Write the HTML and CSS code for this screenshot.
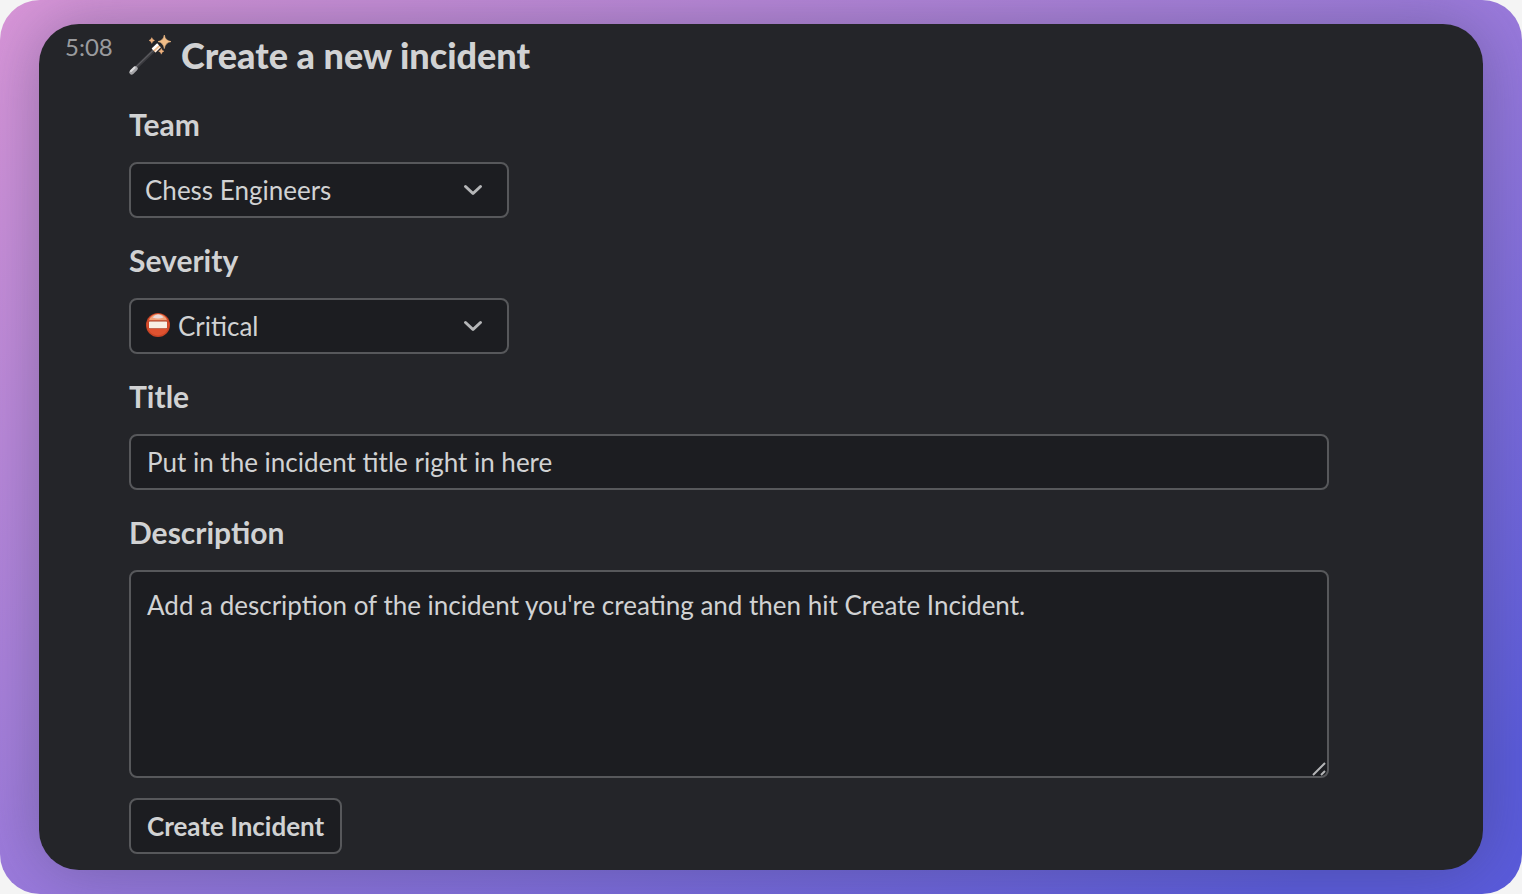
FILE: index.html
```html
<!DOCTYPE html>
<html lang="en">
<head>
<meta charset="utf-8">
<meta name="viewport" content="width=device-width, initial-scale=1">
<title>Create a new incident</title>
<link rel="stylesheet" href="styles.css">
</head>
<body>
<main class="stage">
  <article class="message">
    <time class="time" datetime="05:08">5:08</time>
    <form class="form">
      <h1 class="heading">
        <svg class="wand" viewBox="0 0 42 42" aria-hidden="true">
          <path d="M6 34.5 L28 13.5" stroke="#3c3c40" stroke-width="3.4"/>
          <path d="M6 33.8 L27 13.6" stroke="#5e5e62" stroke-width="1.1"/>
          <path d="M2.6 38.2 L6.4 34.6" stroke="#a5a5a8" stroke-width="4.8" stroke-linecap="round"/>
          <path d="M2 37 L5.6 33.6" stroke="#dededf" stroke-width="2" stroke-linecap="round"/>
          <path d="M24.6 16.6 L30 11.4" stroke="#efb98a" stroke-width="5"/>
          <path d="M23.5 15.4 L29 10.2" stroke="#fff" stroke-width="2.6"/>
          <path d="M26 18 L31.3 12.9" stroke="#fff4ea" stroke-width="1.2"/>
          <path d="M35.3 1 Q36.2 6.6 42 7.6 Q36.2 8.6 35.3 14.6 Q34.4 8.6 29 7.6 Q34.4 6.6 35.3 1Z" fill="#f0bd88" stroke="#f0bd88" stroke-width="0.6"/>
          <path d="M22.8 3.6 Q23.3 5.8 25.6 6.4 Q23.3 7 22.8 9.4 Q22.3 7 20 6.4 Q22.3 5.8 22.8 3.6Z" fill="#eeb07c" stroke="#eeb07c" stroke-width="0.4"/>
          <path d="M32.3 14.4 Q32.8 16.7 35 17.2 Q32.8 17.7 32.3 20.2 Q31.8 17.7 29.6 17.2 Q31.8 16.7 32.3 14.4Z" fill="#eeb07c" stroke="#eeb07c" stroke-width="0.4"/>
        </svg>
        Create a new incident
      </h1>

      <div class="field">
        <label class="label" for="team">Team</label>
        <div class="picker">
          <select class="control select" id="team">
            <option>Chess Engineers</option>
          </select>
          <svg class="chevron" viewBox="0 0 20 12" aria-hidden="true"><path d="M2.5 2.5 L10 9.5 L17.5 2.5"/></svg>
        </div>
      </div>

      <div class="field">
        <label class="label" for="severity">Severity</label>
        <div class="picker">
          <select class="control select select-icon" id="severity">
            <option>Critical</option>
          </select>
          <svg class="no-entry" viewBox="0 0 24 24" aria-hidden="true">
            <circle cx="12" cy="12" r="12" fill="#c94426"/>
            <circle cx="12" cy="11.6" r="10.8" fill="#df5230"/>
            <path d="M3 7.5 Q5 1 12 1 Q19 1 21 7.5Z" fill="#f0a27a"/>
            <path d="M6.5 4.5 Q9 1.5 12 1.5 Q15.5 1.5 17.5 4.5 Q12 6.5 6.5 4.5Z" fill="#e9d8d8"/>
            <rect x="2.6" y="7.6" width="18.8" height="8.2" rx="0.8" fill="#a83a22"/>
            <rect x="3" y="8.4" width="18" height="6.8" rx="0.6" fill="#f8efe4"/>
          </svg>
          <svg class="chevron" viewBox="0 0 20 12" aria-hidden="true"><path d="M2.5 2.5 L10 9.5 L17.5 2.5"/></svg>
        </div>
      </div>

      <div class="field">
        <label class="label" for="title">Title</label>
        <input class="control text" id="title" type="text" value="Put in the incident title right in here">
      </div>

      <div class="field">
        <label class="label" for="description">Description</label>
        <div class="area">
          <textarea class="control textarea" id="description">Add a description of the incident you're creating and then hit Create Incident.</textarea>
          <svg class="grip" viewBox="0 0 14 14" aria-hidden="true"><path d="M1 13 L13 1 M9 13 L13 9"/></svg>
        </div>
      </div>

      <button class="control submit" type="button">Create Incident</button>
    </form>
  </article>
</main>
</body>
</html>
```
FILE: styles.css
```css
* {
  box-sizing: border-box;
}

body {
  margin: 0;
  background: #f4f4f4;
  color: #d1d2d3;
  font-family: Lato, "Liberation Sans", sans-serif;
}

.stage {
  min-height: 100vh;
  display: flex;
  padding: 24px 39px;
  border-radius: 40px;
  overflow: hidden;
  background: linear-gradient(to bottom right, #d996d8, #9a7adc 50%, #5a5bdb 92%);
}

.message {
  flex: 1;
  display: flex;
  padding: 8px 26px 16px;
  border-radius: 40px;
  background: #242529;
  box-shadow: 0 0 64px rgba(60, 60, 90, 0.4);
}

.time {
  flex: 0 0 64px;
  color: #9a9b9e;
  font-size: 24px;
  line-height: 30px;
}

.form {
  flex: 1;
  max-width: 1200px;
}

.heading {
  display: flex;
  align-items: center;
  gap: 10px;
  margin: 0 0 24px;
  font-size: 36px;
  font-weight: 900;
  line-height: 46px;
}

.wand {
  width: 42px;
  height: 42px;
  overflow: visible;
}

.field {
  margin-bottom: 20px;
}

.label {
  display: block;
  margin-bottom: 16px;
  font-size: 30px;
  font-weight: 700;
  line-height: 44px;
}

.control {
  display: block;
  height: 56px;
  margin: 0;
  border: 2px solid #57585b;
  border-radius: 8px;
  background: #1c1d21;
  color: inherit;
  font: 400 26px/36px Lato, "Liberation Sans", sans-serif;
}

.picker {
  position: relative;
  max-width: 380px;
}

.select {
  width: 100%;
  padding: 0 48px 0 14px;
  appearance: none;
}

.select-icon {
  padding-left: 47px;
}

.no-entry {
  position: absolute;
  left: 17px;
  top: 15px;
  width: 24px;
  height: 24px;
  pointer-events: none;
}

.chevron {
  position: absolute;
  right: 26px;
  top: 22px;
  width: 20px;
  height: 12px;
  fill: none;
  stroke: #b5b6b8;
  stroke-width: 3;
  stroke-linecap: round;
  stroke-linejoin: round;
  pointer-events: none;
}

.text {
  width: 100%;
  padding: 0 16px;
}

.area {
  position: relative;
}

.textarea {
  width: 100%;
  height: 208px;
  padding: 15px 16px;
  resize: vertical;
}

.textarea::-webkit-resizer {
  background: transparent;
}

.grip {
  position: absolute;
  right: 3px;
  bottom: 2px;
  width: 14px;
  height: 14px;
  fill: none;
  stroke: #b4b5b7;
  stroke-width: 2;
  pointer-events: none;
}

.submit {
  padding: 0 16px;
  font-weight: 700;
}
```
